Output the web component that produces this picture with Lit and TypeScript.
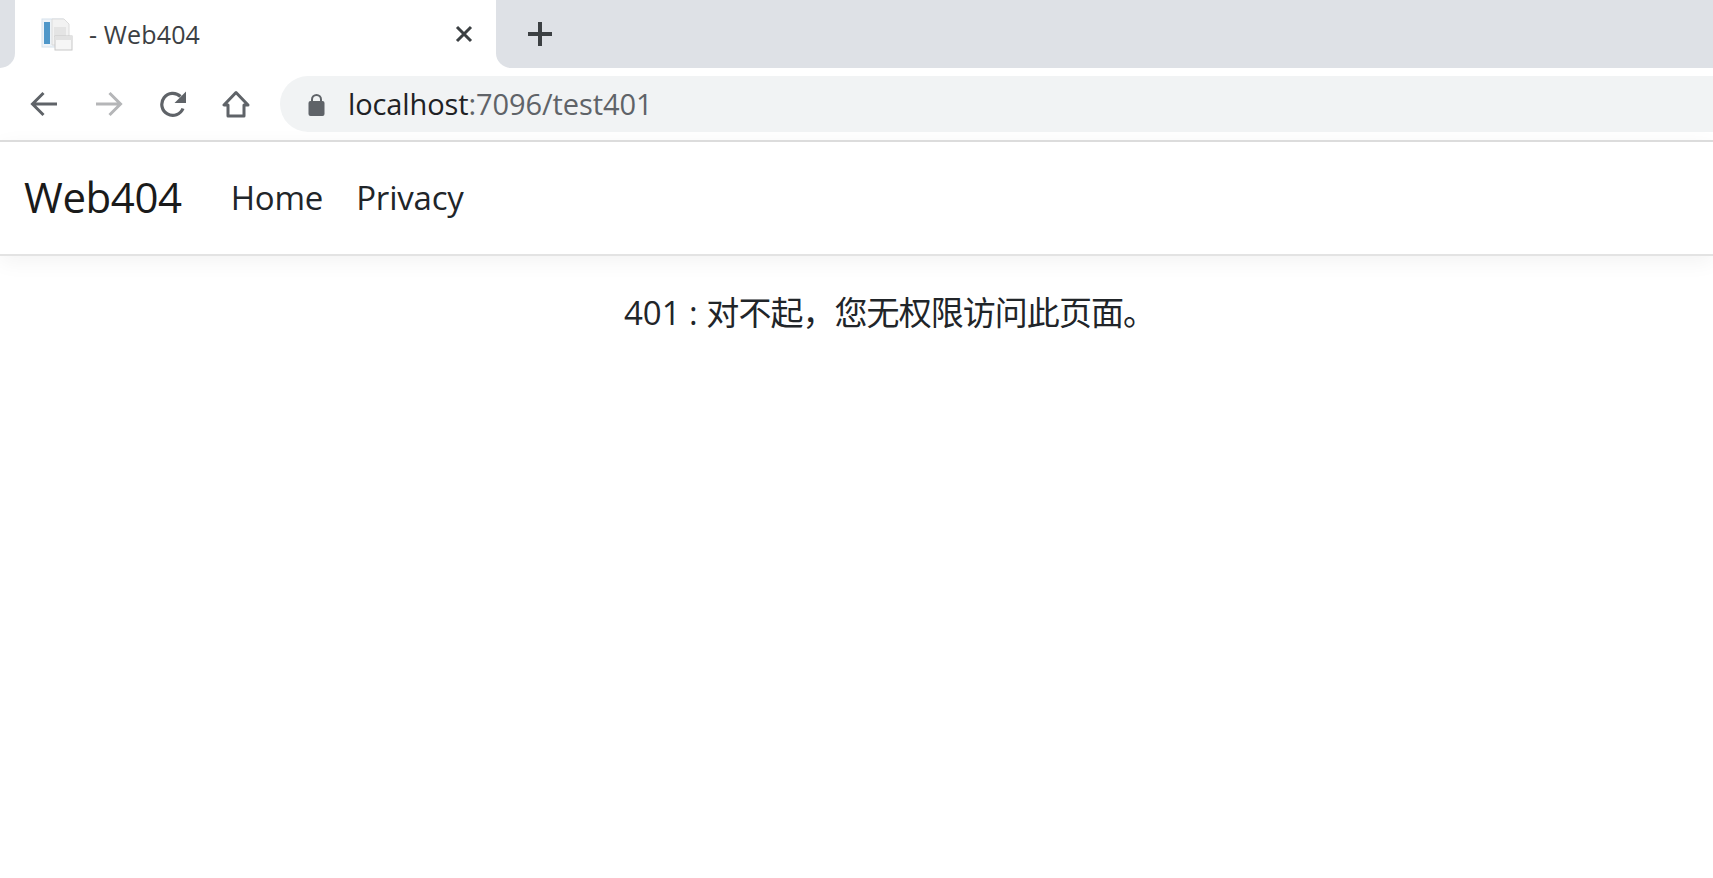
import { LitElement, html, css } from "lit";
import { customElement } from "lit/decorators.js";

@customElement("app-root")
export class AppRoot extends LitElement {
  static styles = css`
    :host { display: block; height: 878px; overflow: hidden; background: #fff; font-family: "Open Sans", "Noto Sans", "Noto Sans CJK SC", sans-serif; color: #212529; }
    svg { display: block; flex: none; }
    .strip { display: flex; height: 68px; background: #fff; }
    .edge { width: 15px; background: #dee1e6; border-bottom-right-radius: 15px; }
    .tab { width: 481px; display: flex; align-items: center; background: #fff; border-radius: 16px 16px 0 0; box-sizing: border-box; padding: 0 23px 0 26px; }
    .tab-title { margin-left: 16px; flex: 1; font-size: 25px; letter-spacing: 0.15px; color: #3c4043; }
    .rest { flex: 1; display: flex; align-items: center; padding: 0 0 0 31px; background: #dee1e6; border-bottom-left-radius: 15px; }
    .toolbar { display: flex; align-items: center; height: 72px; box-sizing: border-box; padding: 0 0 0 29px; }
    .btns { display: flex; align-items: center; gap: 35px; }
    .omni { flex: 1; margin-left: 30px; height: 56px; display: flex; align-items: center; padding-left: 28px; background: #f1f3f4; border-radius: 28px 0 0 28px; }
    .url { margin: 0 0 2px 23px; font-size: 29px; letter-spacing: -0.1px; color: #5f6368; }
    .host { color: #202124; }
    nav { display: flex; align-items: center; height: 116px; box-sizing: border-box; padding: 0 0 3px 24px; border-top: 2px solid #dcdcdc; border-bottom: 2px solid #e3e3e3; box-shadow: 0 6px 20px rgba(0,0,0,0.05); color: #212529; }
    .brand { font-size: 42px; letter-spacing: -0.4px; color: #1a1a1a; }
    .links { display: flex; gap: 33px; margin: 2px 0 0 49px; font-size: 33px; letter-spacing: -0.2px; }
    main { padding: 32px 0 0 66px; text-align: center; font-size: 33px; line-height: 46px; }
    .cjk { font-family: "Noto Sans CJK SC", sans-serif; letter-spacing: -0.95px; }
  `;

  render() {
    return html`
      <div class="strip">
        <div class="edge"></div>
        <div class="tab">
          <svg width="32" height="34" viewBox="0 0 32 34">
            <rect x="1" y="2" width="21" height="28" fill="#eef3f8" stroke="#d6e2ec"/>
            <rect x="3" y="5" width="6" height="22" fill="#4f97c9"/>
            <path d="M11 2h12l5 5v21H11z" fill="#f2f2f2" stroke="#dcdcdc"/>
            <rect x="13" y="10" width="12" height="10" fill="#e4e4e4"/>
            <rect x="14" y="19" width="17" height="14" fill="#f6f6f6" stroke="#c8c8c8"/>
            <rect x="14" y="19" width="17" height="4" fill="#e2e2e2"/>
          </svg>
          <span class="tab-title">- Web404</span>
          <svg width="18" height="18" viewBox="0 0 18 18"><path d="M2 2l14 14M16 2L2 16" stroke="#3c4043" stroke-width="3" fill="none"/></svg>
        </div>
        <div class="rest">
          <svg width="26" height="26" viewBox="0 0 26 26"><path d="M13 1v24M1 13h24" stroke="#3c4043" stroke-width="4" fill="none"/></svg>
        </div>
      </div>
      <div class="toolbar">
        <div class="btns">
          <svg width="30" height="28" viewBox="0 0 30 28"><path d="M28 14H4M14.5 3L3.5 14l11 11" stroke="#5f6368" stroke-width="3" fill="none"/></svg>
          <svg width="30" height="28" viewBox="0 0 30 28"><path d="M2 14h24M15.5 3l11 11-11 11" stroke="#b5b6b8" stroke-width="3" fill="none"/></svg>
          <svg width="28" height="28" viewBox="0 0 28 28"><path d="M24 18.5A11 11 0 1 1 21.5 6.5" stroke="#5f6368" stroke-width="3.2" fill="none"/><path d="M27 1.5v11.5H15.5z" fill="#5f6368"/></svg>
          <svg width="28" height="28" viewBox="0 0 28 28"><path d="M14 2.5L2 15H6V26H22V15H26z" stroke="#5f6368" stroke-width="3" stroke-linejoin="round" fill="none"/></svg>
        </div>
        <div class="omni">
          <svg width="17" height="23" viewBox="0 0 17 23"><path d="M4 9V6.5a4.5 4.5 0 0 1 9 0V9" stroke="#5f6368" stroke-width="2" fill="none"/><rect x="0.5" y="8" width="16" height="15" rx="2" fill="#5f6368"/></svg>
          <span class="url"><span class="host">localhost</span>:7096/test401</span>
        </div>
      </div>
      <nav>
        <span class="brand">Web404</span>
        <div class="links"><span>Home</span><span>Privacy</span></div>
      </nav>
      <main><span>401 : </span><span class="cjk">对不起，您无权限访问此页面。</span></main>
    `;
  }
}
